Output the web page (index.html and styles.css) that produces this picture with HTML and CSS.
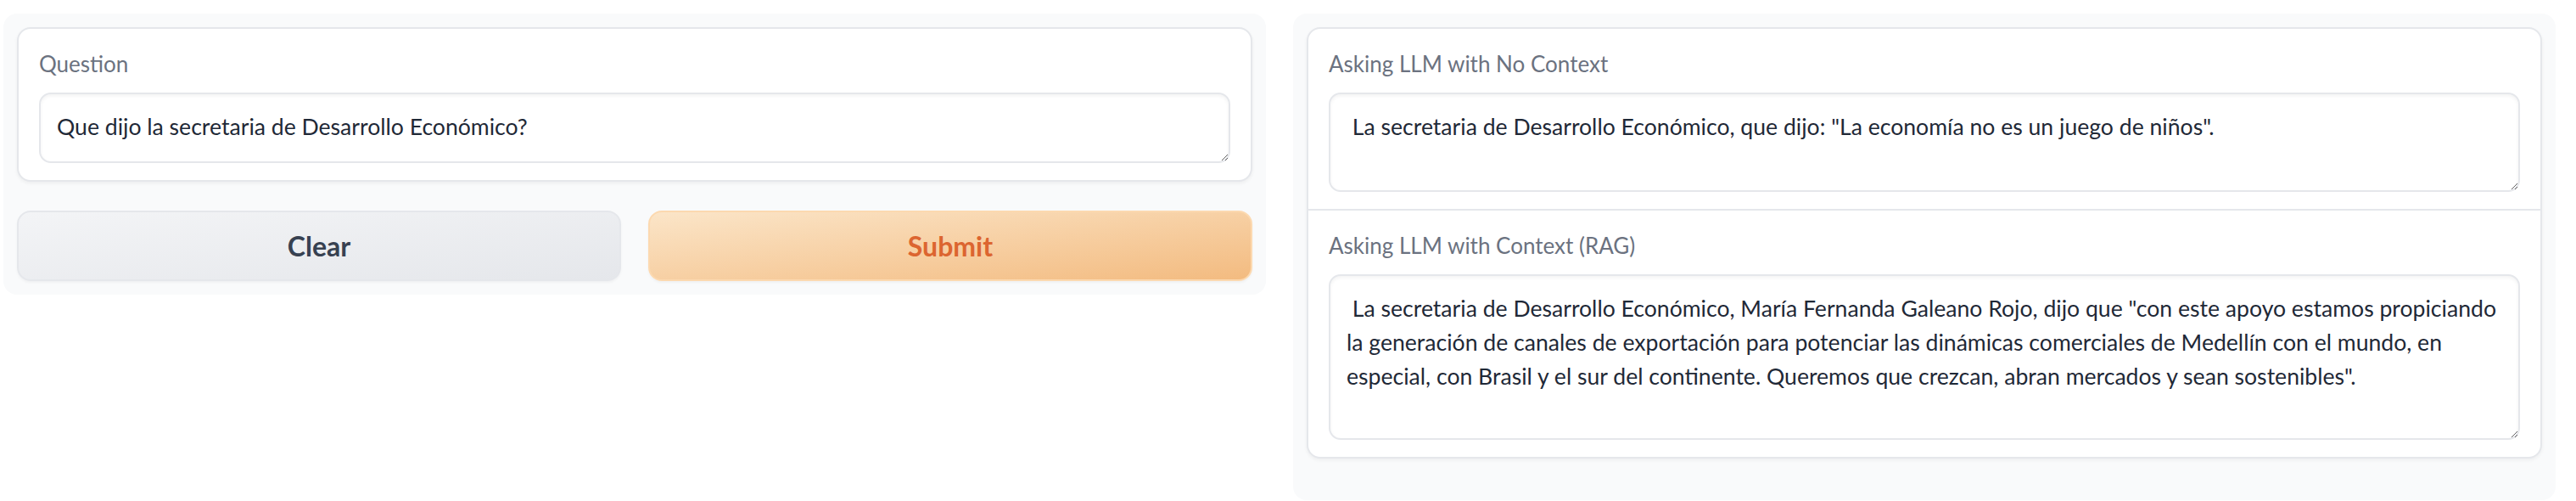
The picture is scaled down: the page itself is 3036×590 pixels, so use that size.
FILE: index.html
```html
<!DOCTYPE html>
<html lang="es">
<head>
<meta charset="utf-8">
<title>RAG demo</title>
<link rel="stylesheet" href="styles.css">
</head>
<body>
<div class="row">
  <div class="panel panel-left">
    <div class="form">
      <label class="field">
        <span class="label">Question</span>
        <textarea class="box box-q">Que dijo la secretaria de Desarrollo Económico?</textarea>
      </label>
    </div>
    <div class="buttons">
      <button class="btn btn-secondary">Clear</button>
      <button class="btn btn-primary">Submit</button>
    </div>
  </div>
  <div class="panel panel-right">
    <div class="form">
      <label class="field">
        <span class="label">Asking LLM with No Context</span>
        <textarea class="box box-a"> La secretaria de Desarrollo Económico, que dijo: "La economía no es un juego de niños".</textarea>
      </label>
      <div class="divider"></div>
      <label class="field">
        <span class="label">Asking LLM with Context (RAG)</span>
        <textarea class="box box-b"> La secretaria de Desarrollo Económico, María Fernanda Galeano Rojo, dijo que "con este apoyo estamos propiciando la generación de canales de exportación para potenciar las dinámicas comerciales de Medellín con el mundo, en especial, con Brasil y el sur del continente. Queremos que crezcan, abran mercados y sean sostenibles".</textarea>
      </label>
    </div>
  </div>
</div>
</body>
</html>
```

FILE: styles.css
```css
html, body {
  margin: 0;
  background: #ffffff;
}
body {
  padding: 16px 24px 0 4px;
  font-family: Lato, "Open Sans", sans-serif;
  color: #1f2937;
}
.row {
  display: flex;
  gap: 32px;
  align-items: flex-start;
}
.panel {
  flex: 1 1 0;
  min-width: 0;
  background: #f9fafb;
  border-radius: 16px;
  padding: 16px;
  display: flex;
  flex-direction: column;
  gap: 34px;
}
.panel-right {
  padding-bottom: 49px;
}
.form {
  background: #ffffff;
  border: 2px solid #e5e7eb;
  border-radius: 16px;
  box-shadow: 0 2px 4px rgba(0, 0, 0, 0.05);
  display: flex;
  flex-direction: column;
  overflow: hidden;
}
.field {
  display: flex;
  flex-direction: column;
  padding: 20px 24px;
}
.divider {
  height: 2px;
  background: #e5e7eb;
}
.label {
  font-size: 26px;
  line-height: 42px;
  color: #6b7280;
  margin-bottom: 13px;
}
.box {
  display: block;
  box-sizing: border-box;
  width: 100%;
  margin: 0;
  font-family: inherit;
  font-size: 26.6px;
  line-height: 40px;
  color: #1f2937;
  background: #ffffff;
  border: 2px solid #e5e7eb;
  border-radius: 14px;
  box-shadow: inset 0 2px 4px rgba(0, 0, 0, 0.05);
  padding: 18px 12px 18px 19px;
  resize: vertical;
  outline: none;
  overflow: hidden;
}
.box-q { height: 83px; }
.box-a { height: 117px; }
.box-b { height: 195px; }
.buttons {
  display: flex;
  gap: 32px;
}
.btn {
  flex: 1 1 0;
  height: 83px;
  border-radius: 16px;
  font-family: inherit;
  font-size: 32px;
  font-weight: 700;
  box-shadow: 0 2px 3px rgba(0, 0, 0, 0.04);
}
.btn-secondary {
  background: linear-gradient(to bottom right, #f3f4f6, #e5e7eb);
  border: 2px solid #e5e7eb;
  color: #374151;
}
.btn-primary {
  background: linear-gradient(to bottom right, #fbe5c8, #f3bb80);
  border: 2px solid #fcd9b0;
  color: #dc6530;
}
```
